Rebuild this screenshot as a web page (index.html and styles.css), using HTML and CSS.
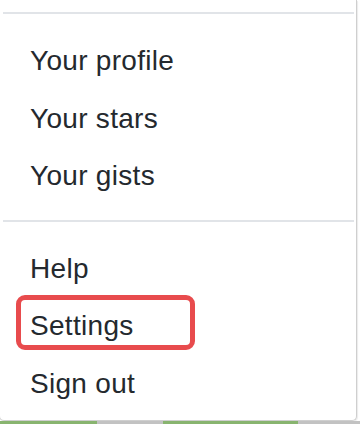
FILE: index.html
```html
<!DOCTYPE html>
<html>
<head>
<meta charset="utf-8">
<link rel="stylesheet" href="styles.css">
</head>
<body>
<div class="page">
  <div class="menu">
    <div class="divider divider-top"></div>
    <ul class="group group-first">
      <li class="item">Your profile</li>
      <li class="item">Your stars</li>
      <li class="item">Your gists</li>
    </ul>
    <div class="divider divider-mid"></div>
    <ul class="group group-second">
      <li class="item">Help</li>
      <li class="item item-highlight">Settings<span class="highlight"></span></li>
      <li class="item">Sign out</li>
    </ul>
  </div>
  <div class="strip">
    <span class="seg green s1"></span>
    <span class="seg grey s2"></span>
    <span class="seg green s3"></span>
    <span class="seg grey s4"></span>
  </div>
</div>
</body>
</html>
```
FILE: styles.css
```css
html, body {
  margin: 0;
  padding: 0;
  background: #ffffff;
}
.page {
  width: 360px;
  height: 424px;
  overflow: hidden;
  display: flex;
  flex-direction: column;
}
.menu {
  width: 358px;
  height: 421px;
  margin-left: -1px;
  box-sizing: border-box;
  background: #ffffff;
  border: 1px solid #cfcfcf;
  border-top: none;
  border-radius: 0 0 5px 5px;
  box-shadow: 1px 1px 1px rgba(0, 0, 0, 0.08);
  padding-top: 12px;
  display: flex;
  flex-direction: column;
  font-family: "Liberation Sans", Arial, sans-serif;
  color: #24292e;
}
.divider {
  height: 2px;
  background: #e1e4e8;
  margin: 0 2px 0 3px;
  flex: none;
}
.group {
  list-style: none;
  margin: 0;
  padding: 0;
}
.group-first {
  margin-top: 18.4px;
}
.divider-mid {
  margin-top: 16px;
}
.group-second {
  margin-top: 17.7px;
}
.item {
  position: relative;
  font-size: 28px;
  letter-spacing: 0.3px;
  line-height: 41.3px;
  padding: 8px 0 8px 30px;
  white-space: nowrap;
}
.highlight {
  position: absolute;
  left: 16px;
  top: -2.3px;
  width: 179px;
  height: 55px;
  box-sizing: border-box;
  border: 5px solid #e84b4d;
  border-radius: 9px;
}
.strip {
  height: 3px;
  display: flex;
  flex: none;
}
.seg {
  height: 3px;
  display: block;
}
.green { background: #88b46f; }
.grey { background: #c2c2c2; }
.s1 { width: 97px; }
.s2 { width: 66px; }
.s3 { width: 135px; }
.s4 { flex: 1; }
```
